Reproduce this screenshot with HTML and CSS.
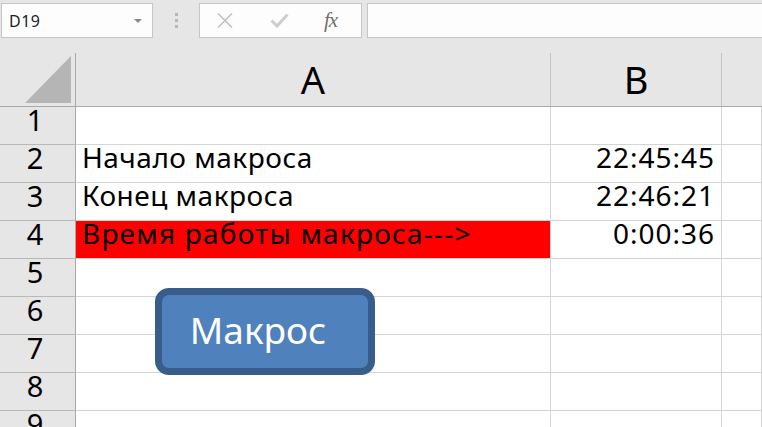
FILE: index.html
```html
<!DOCTYPE html>
<html lang='ru'>
<head>
    <meta charset='UTF-8'>
    <meta name='viewport' content='width=device-width, initial-scale=1.0'>
    <title>Макрос</title>
    <link rel="stylesheet" href="styles.css">
</head>
<body>
    <div class="toolbar">
        <div class="namebox">
            <span>D19</span>
            <svg class="dropdown" width="8" height="4" viewBox="0 0 8 4"><path d="M0 0 L8 0 L4 4 Z" fill="#8a8a8a"/></svg>
        </div>
        <div class="grip">
            <span class="dot"></span>
            <span class="dot"></span>
            <span class="dot"></span>
        </div>
        <div class="fxgroup">
            <svg class="icon_cancel" width="16" height="15" viewBox="0 0 16 15">
                <path d="M1 0.5 L15 14.5 M15 0.5 L1 14.5" stroke="#c2c2c2" stroke-width="1.6" fill="none"/>
            </svg>
            <svg class="icon_enter" width="19" height="15" viewBox="0 0 19 15">
                <path d="M1.5 7.5 L7 13 L17.5 1.5" stroke="#cdcdcd" stroke-width="3" fill="none"/>
            </svg>
            <span class="fx">fx</span>
        </div>
        <div class="formula"></div>
    </div>

    <div class="sheet">
        <div class="corner">
            <svg width="46" height="47" viewBox="0 0 46 47"><path d="M46 0 L46 47 L0 47 Z" fill="#b5b5b5"/></svg>
        </div>
        <div class="colhead">A</div>
        <div class="colhead">B</div>
        <div class="colhead colhead_last"></div>

        <div class="rowhead">1</div>
        <div class="cell"></div>
        <div class="cell"></div>
        <div class="cell"></div>

        <div class="rowhead">2</div>
        <div class="cell">Начало макроса</div>
        <div class="cell cell_time">22:45:45</div>
        <div class="cell"></div>

        <div class="rowhead">3</div>
        <div class="cell">Конец макроса</div>
        <div class="cell cell_time">22:46:21</div>
        <div class="cell"></div>

        <div class="rowhead">4</div>
        <div class="cell cell_red">Время работы макроса---&gt;</div>
        <div class="cell cell_time">0:00:36</div>
        <div class="cell"></div>

        <div class="rowhead">5</div>
        <div class="cell"></div>
        <div class="cell"></div>
        <div class="cell"></div>

        <div class="rowhead">6</div>
        <div class="cell"></div>
        <div class="cell"></div>
        <div class="cell"></div>

        <div class="rowhead">7</div>
        <div class="cell"></div>
        <div class="cell"></div>
        <div class="cell"></div>

        <div class="rowhead">8</div>
        <div class="cell"></div>
        <div class="cell"></div>
        <div class="cell"></div>

        <div class="rowhead">9</div>
        <div class="cell"></div>
        <div class="cell"></div>
        <div class="cell"></div>

        <button class="macro_button">Макрос</button>
    </div>
</body>
</html>
```

FILE: styles.css
```css
body
{
    margin: 0;
    width: 762px;
    height: 427px;
    overflow: hidden;
    background: #e6e6e6;
    font-family: 'Noto Sans', 'Open Sans', sans-serif;
}
.toolbar
{
    display: flex;
    align-items: flex-start;
    height: 53px;
    padding-top: 3px;
    box-sizing: border-box;
}
.namebox
{
    display: flex;
    align-items: center;
    justify-content: space-between;
    width: 152px;
    height: 35px;
    margin-left: 1px;
    padding: 0 10px 0 7px;
    box-sizing: border-box;
    border: 1px solid #c6c6c6;
    background: #fdfdfd;
    font-size: 16px;
    letter-spacing: 0.5px;
    color: #222;
}
.grip
{
    display: flex;
    flex-direction: column;
    gap: 3px;
    width: 46px;
    padding-top: 10px;
    align-items: center;
}
.dot
{
    width: 3px;
    height: 3px;
    background: #b8b8b8;
}
.fxgroup
{
    display: flex;
    align-items: center;
    width: 163px;
    height: 35px;
    box-sizing: border-box;
    border: 1px solid #c6c6c6;
    background: #fdfdfd;
}
.icon_cancel
{
    margin-left: 17px;
}
.icon_enter
{
    margin-left: 37px;
}
.fx
{
    margin-left: 35px;
    font-family: 'Liberation Serif', serif;
    font-style: italic;
    font-size: 21px;
    color: #707070;
    letter-spacing: -1px;
}
.formula
{
    flex: 1;
    height: 35px;
    margin-left: 5px;
    box-sizing: border-box;
    border: 1px solid #c6c6c6;
    border-right: none;
    background: #fdfdfd;
}
.sheet
{
    position: relative;
    display: grid;
    grid-template-columns: 76px 475px 171px 1fr;
    grid-template-rows: 54px repeat(9, 38px);
    background: #fff;
}
.corner
{
    display: flex;
    justify-content: flex-end;
    align-items: flex-end;
    padding: 0 4px 3px 0;
    background: #e6e6e6;
    border-right: 1px solid #a9a9a9;
    border-bottom: 1px solid #a9a9a9;
}
.colhead
{
    background: #e6e6e6;
    border-right: 1px solid #c4c4c4;
    border-bottom: 1px solid #a9a9a9;
    text-align: center;
    font-size: 38px;
    line-height: 53px;
    color: #000;
}
.colhead_last
{
    border-right: none;
}
.rowhead
{
    background: #e6e6e6;
    border-right: 1px solid #a9a9a9;
    border-bottom: 1px solid #b8b8b8;
    text-align: center;
    padding-right: 5px;
    font-size: 29px;
    line-height: 26px;
    color: #000;
}
.cell
{
    border-right: 1px solid #d4d4d4;
    border-bottom: 1px solid #d4d4d4;
    padding: 0 6px;
    font-size: 28px;
    line-height: 25px;
    letter-spacing: 0.5px;
    color: #000;
    white-space: nowrap;
}
.cell_time
{
    text-align: right;
    padding-right: 6px;
    letter-spacing: 1px;
}
.cell_red
{
    background: #ff0000;
    letter-spacing: 1.2px;
}
.macro_button
{
    position: absolute;
    left: 155px;
    top: 235px;
    width: 220px;
    height: 87px;
    padding: 0 14px 4px 0;
    border: 7px solid #385d8a;
    border-radius: 14px;
    background: #4f81bd;
    font-family: 'Noto Sans', 'Open Sans', sans-serif;
    font-size: 37px;
    color: #fff;
}
```
